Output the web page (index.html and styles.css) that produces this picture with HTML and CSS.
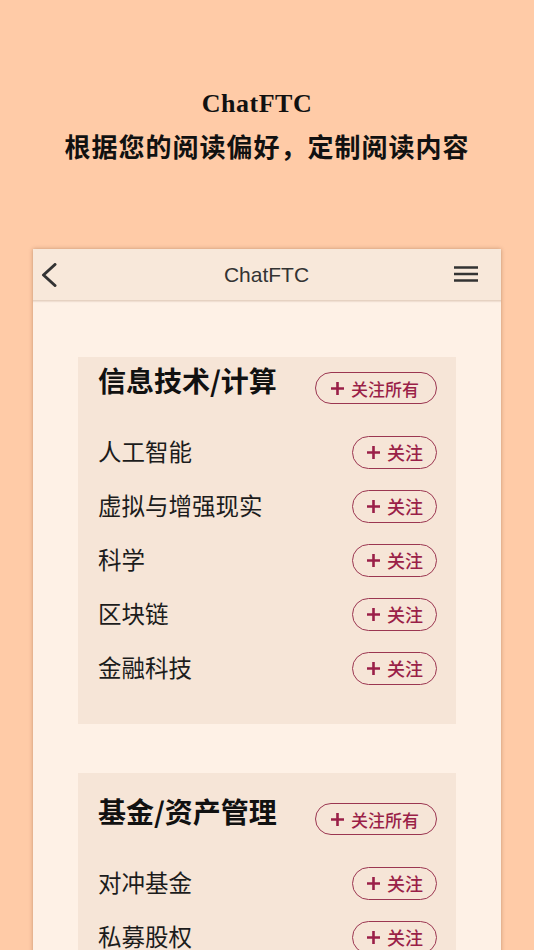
FILE: index.html
```html
<!DOCTYPE html>
<html lang="zh-CN">
<head>
<meta charset="utf-8">
<title>ChatFTC</title>
<link rel="stylesheet" href="styles.css">
</head>
<body>
<header class="hero">
  <h1 class="hero-title">ChatFTC</h1>
  <p class="hero-sub">根据您的阅读偏好，定制阅读内容</p>
</header>
<main class="phone">
  <div class="topbar">
    <svg class="icon-back" width="16" height="24" viewBox="0 0 16 24"><path d="M14 1.5 L2.5 12 L14 22.5" fill="none" stroke="#333" stroke-width="3" stroke-linecap="round" stroke-linejoin="round"/></svg>
    <div class="topbar-title">ChatFTC</div>
    <svg class="icon-menu" width="24" height="18" viewBox="0 0 24 18"><path d="M0 2.5 H24 M0 9 H24 M0 15.5 H24" stroke="#333" stroke-width="2.6"/></svg>
  </div>
  <div class="content">
    <section class="group">
      <div class="group-head">
        <h2 class="group-title">信息技术/计算</h2>
        <button class="follow follow-all"><svg class="plus" width="13" height="13" viewBox="0 0 13 13"><path d="M6.5 0 V13 M0 6.5 H13" stroke="currentColor" stroke-width="2.6"/></svg>关注所有</button>
      </div>
      <div class="row"><span class="row-name">人工智能</span><button class="follow"><svg class="plus" width="13" height="13" viewBox="0 0 13 13"><path d="M6.5 0 V13 M0 6.5 H13" stroke="currentColor" stroke-width="2.6"/></svg>关注</button></div>
      <div class="row"><span class="row-name">虚拟与增强现实</span><button class="follow"><svg class="plus" width="13" height="13" viewBox="0 0 13 13"><path d="M6.5 0 V13 M0 6.5 H13" stroke="currentColor" stroke-width="2.6"/></svg>关注</button></div>
      <div class="row"><span class="row-name">科学</span><button class="follow"><svg class="plus" width="13" height="13" viewBox="0 0 13 13"><path d="M6.5 0 V13 M0 6.5 H13" stroke="currentColor" stroke-width="2.6"/></svg>关注</button></div>
      <div class="row"><span class="row-name">区块链</span><button class="follow"><svg class="plus" width="13" height="13" viewBox="0 0 13 13"><path d="M6.5 0 V13 M0 6.5 H13" stroke="currentColor" stroke-width="2.6"/></svg>关注</button></div>
      <div class="row"><span class="row-name">金融科技</span><button class="follow"><svg class="plus" width="13" height="13" viewBox="0 0 13 13"><path d="M6.5 0 V13 M0 6.5 H13" stroke="currentColor" stroke-width="2.6"/></svg>关注</button></div>
    </section>
    <section class="group group-second">
      <div class="group-head">
        <h2 class="group-title">基金/资产管理</h2>
        <button class="follow follow-all"><svg class="plus" width="13" height="13" viewBox="0 0 13 13"><path d="M6.5 0 V13 M0 6.5 H13" stroke="currentColor" stroke-width="2.6"/></svg>关注所有</button>
      </div>
      <div class="row"><span class="row-name">对冲基金</span><button class="follow"><svg class="plus" width="13" height="13" viewBox="0 0 13 13"><path d="M6.5 0 V13 M0 6.5 H13" stroke="currentColor" stroke-width="2.6"/></svg>关注</button></div>
      <div class="row"><span class="row-name">私募股权</span><button class="follow"><svg class="plus" width="13" height="13" viewBox="0 0 13 13"><path d="M6.5 0 V13 M0 6.5 H13" stroke="currentColor" stroke-width="2.6"/></svg>关注</button></div>
    </section>
  </div>
</main>
</body>
</html>
```
FILE: styles.css
```css
html, body {
  margin: 0;
  padding: 0;
}
body {
  background: #ffcba7;
  font-family: "Noto Sans CJK SC", "Noto Sans", sans-serif;
  height: 950px;
  overflow: hidden;
}
.hero {
  padding-top: 89px;
  text-align: center;
  color: #111;
}
.hero-title {
  margin: 0;
  padding-right: 20px;
  font-family: "Liberation Serif", "Noto Sans CJK SC", serif;
  font-weight: 700;
  font-size: 26px;
  line-height: 30px;
  letter-spacing: 0.5px;
}
.hero-sub {
  margin: 12px 0 0;
  font-family: "Noto Sans CJK SC", sans-serif;
  font-weight: 700;
  font-size: 26px;
  line-height: 30px;
  letter-spacing: 1px;
}
.phone {
  margin: 88px 33px 0;
  background: #fef1e6;
  box-shadow: 0 0 4px rgba(90, 50, 20, 0.35);
  height: 720px;
}
.topbar {
  height: 51px;
  border-bottom: 1px solid #e6d2c2;
  background: #f8e8da;
  display: flex;
  align-items: center;
  justify-content: space-between;
  padding: 0 23px 0 8px;
  box-shadow: 0 1px 1px rgba(200, 170, 150, 0.25);
}
.icon-back { display: block; margin-top: 1px; }
.icon-menu { display: block; margin-top: -2px; }
.topbar-title {
  font-family: "Liberation Sans", Arial, sans-serif;
  font-size: 21px;
  color: #333;
  margin-left: 22px;
}
.content {
  padding: 56px 45px 0;
  display: flex;
  flex-direction: column;
  gap: 49px;
}
.group {
  background: #f6e5d7;
  padding: 9px 19px 29px 20px;
}
.group-second {
  padding-top: 24px;
}
.group-head {
  display: flex;
  justify-content: space-between;
  align-items: flex-start;
  margin-bottom: 21px;
}
.group-title {
  margin: 0;
  font-size: 28px;
  line-height: 28px;
  font-weight: 700;
  color: #111;
}
.follow {
  display: flex;
  align-items: center;
  gap: 7px;
  height: 33px;
  box-sizing: border-box;
  padding: 0 13px 0 14px;
  border: 1.5px solid #9b3651;
  border-radius: 17px;
  background: transparent;
  color: #9a1f48;
  font-family: "Noto Sans CJK SC", sans-serif;
  font-size: 18px;
  font-weight: 500;
  line-height: 1;
}
.follow-all {
  margin-top: 6px;
  height: 32px;
  padding: 0 17px 0 15px;
  font-size: 17px;
}
.plus {
  display: block;
  flex: none;
}
.row {
  height: 54px;
  display: flex;
  align-items: center;
  justify-content: space-between;
}
.row-name {
  font-size: 23.5px;
  color: #1c1c1c;
  line-height: 1;
}
```
